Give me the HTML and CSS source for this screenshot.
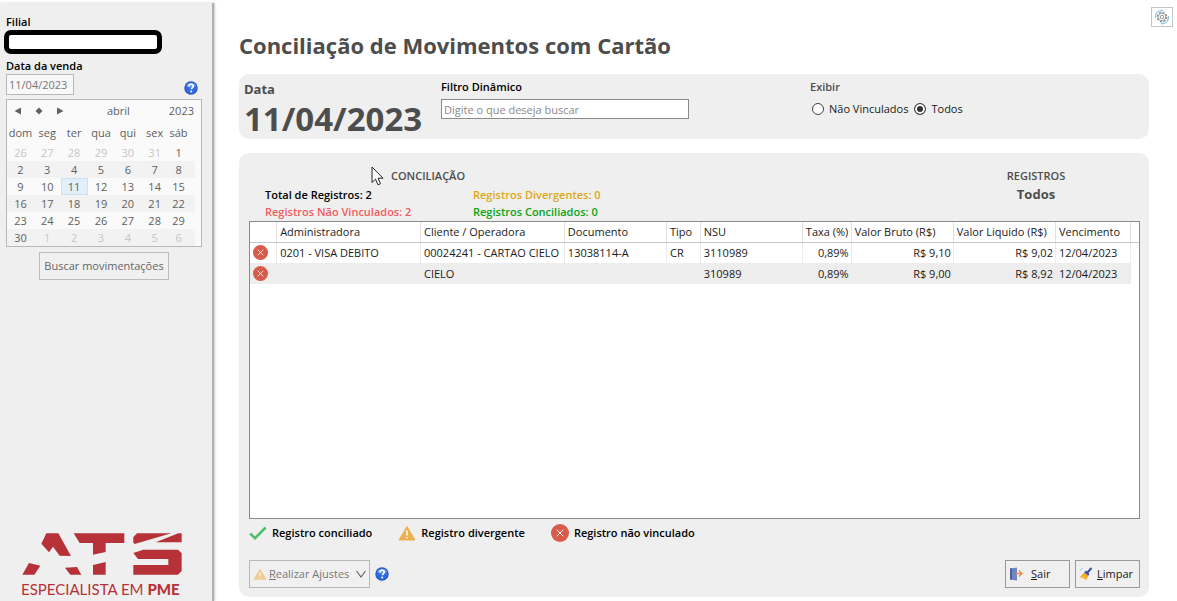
FILE: index.html
```html
<!DOCTYPE html>
<html lang="pt-BR">
<head>
    <meta charset="UTF-8">
    <meta name="viewport" content="width=device-width, initial-scale=1.0">
    <title>Conciliação de Movimentos com Cartão</title>
    <link rel="stylesheet" href="styles.css">
</head>
<body>
    <!-- shared icons -->
    <svg class="symbols" aria-hidden="true">
        <symbol id="icon-help" viewBox="0 0 14 14">
            <circle cx="7" cy="7" r="6.7" fill="#1f4fc0"/>
            <circle cx="7" cy="7" r="5.8" fill="#2f6be0"/>
            <path d="M2 5a5.5 5.5 0 0 1 10 0Q7 8 2 5z" fill="#6a9cf0"/>
            <path d="M4.9 5.5c0-1.5 1-2.2 2.2-2.2s2.2.7 2.2 1.9c0 1.5-2 1.6-2 3" fill="none" stroke="#fff" stroke-width="1.6"/>
            <circle cx="7.2" cy="10.5" r="1" fill="#fff"/>
        </symbol>
        <symbol id="icon-error" viewBox="0 0 18 18">
            <circle cx="9" cy="9" r="9" fill="#d75a4a"/>
            <path d="M6 6l6 6M12 6l-6 6" stroke="#fff" stroke-width="1" stroke-linecap="round"/>
        </symbol>
        <symbol id="icon-warn" viewBox="0 0 18 16">
            <path d="M9 1.5L17 15H1z" fill="#efb04d" stroke="#efb04d" stroke-width="1" stroke-linejoin="round"/>
            <path d="M9 5.5v5M9 12v1.6" stroke="#fff" stroke-width="1.6"/>
        </symbol>
        <symbol id="icon-check" viewBox="0 0 18 14">
            <path d="M1.2 7.6L6 12.2 16.6 1.5" fill="none" stroke="#4fc06a" stroke-width="2.6"/>
        </symbol>
    </svg>

    <aside class="sidebar">
        <label class="field_label" for="filial">Filial</label>
        <input type="text" id="filial" class="filial">
        <label class="field_label" for="data_venda">Data da venda</label>
        <div class="date_row">
            <input type="text" id="data_venda" class="date_box" value="11/04/2023">
            <a href="#" class="help" aria-label="Ajuda"><svg width="14" height="14"><use href="#icon-help"/></svg></a>
        </div>

        <div class="calendar">
            <div class="calendar_head">
                <button class="nav" aria-label="Anterior"><svg width="8" height="8"><path d="M7 0.5v7L0.5 4z"/></svg></button>
                <button class="nav" aria-label="Hoje"><svg width="8" height="8"><path d="M4 0.5L7.5 4 4 7.5 0.5 4z"/></svg></button>
                <button class="nav" aria-label="Próximo"><svg width="8" height="8"><path d="M1 0.5v7L7.5 4z"/></svg></button>
                <span class="month">abril</span>
                <span>2023</span>
            </div>
            <table class="days">
                <thead>
                    <tr><th>dom</th><th>seg</th><th>ter</th><th>qua</th><th>qui</th><th>sex</th><th>sáb</th></tr>
                </thead>
                <tbody>
                    <tr><td class="out">26</td><td class="out">27</td><td class="out">28</td><td class="out">29</td><td class="out">30</td><td class="out">31</td><td>1</td></tr>
                    <tr><td>2</td><td>3</td><td>4</td><td>5</td><td>6</td><td>7</td><td>8</td></tr>
                    <tr><td>9</td><td>10</td><td class="selected">11</td><td>12</td><td>13</td><td>14</td><td>15</td></tr>
                    <tr><td>16</td><td>17</td><td>18</td><td>19</td><td>20</td><td>21</td><td>22</td></tr>
                    <tr><td>23</td><td>24</td><td>25</td><td>26</td><td>27</td><td>28</td><td>29</td></tr>
                    <tr><td>30</td><td class="out">1</td><td class="out">2</td><td class="out">3</td><td class="out">4</td><td class="out">5</td><td class="out">6</td></tr>
                </tbody>
            </table>
        </div>
        <button class="buttons search">Buscar movimentações</button>

        <div class="logo">
            <svg width="160" height="42" viewBox="67 38 480 126" fill="#b63238">
                <path d="M140 39H176L214 107 180 106 160 79 148 96 125 70z"/>
                <path d="M88 128L122 136 104 163H68zM196 142L232 140 245 163H212z"/>
                <path d="M222 39H374V68H318V95L280 103V68H240z"/>
                <path d="M280 134L318 125V163H280z"/>
                <path d="M412 39H515L405 71 401 66V50z"/>
                <path d="M536 39H546V66H468z"/>
                <path d="M401 98L430 88H535L546 99V152L535 163H401V134H506V116H415z"/>
            </svg>
            <p class="slogan">ESPECIALISTA EM <b>PME</b></p>
        </div>
    </aside>

    <main class="main">
        <header class="top">
            <h1 class="heading">Conciliação de Movimentos com Cartão</h1>
            <button class="config" aria-label="Configurações">
                <svg width="16" height="16" viewBox="0 0 16 16" fill="none">
                    <path d="M1.5 9A6.6 6.6 0 0 1 8 1.4M14.5 7A6.6 6.6 0 0 1 8 14.6" stroke="#8cc8ea" stroke-width="1.2"/>
                    <path d="M7.5 0l2 1.4-2 1.4M8.5 13.2l-2 1.4 2 1.4" fill="#8cc8ea"/>
                    <circle cx="8" cy="8" r="4.6" stroke="#8a8a8a" stroke-width="1.4" stroke-dasharray="2 1.61"/>
                    <circle cx="8" cy="8" r="3.8" stroke="#8a8a8a" stroke-width="0.8"/>
                    <circle cx="8" cy="8" r="1.7" stroke="#8a8a8a" stroke-width="0.9"/>
                </svg>
            </button>
        </header>

        <section class="card filters">
            <div class="filter_date">
                <h2>Data</h2>
                <p class="big_date">11/04/2023</p>
            </div>
            <div class="filter_text">
                <label class="field_label" for="filtro">Filtro Dinâmico</label>
                <input type="text" id="filtro" class="textbox" placeholder="Digite o que deseja buscar">
            </div>
            <fieldset class="filter_show">
                <legend>Exibir</legend>
                <label><input type="radio" name="exibir">Não Vinculados</label>
                <label><input type="radio" name="exibir" checked>Todos</label>
            </fieldset>
        </section>

        <section class="card records">
            <div class="summary">
                <div class="totals">
                    <h3>CONCILIAÇÃO</h3>
                    <div class="totals_grid">
                        <span>Total de Registros: 2</span>
                        <span class="yellow">Registros Divergentes: 0</span>
                        <span class="red">Registros Não Vinculados: 2</span>
                        <span class="green">Registros Conciliados: 0</span>
                    </div>
                </div>
                <div class="showing">
                    <h3>REGISTROS</h3>
                    <p>Todos</p>
                </div>
            </div>

            <div class="grid_box">
                <table class="grid">
                    <colgroup>
                        <col class="c_icon"><col class="c_name"><col class="c_name"><col class="c_mid"><col class="c_type"><col class="c_mid"><col class="c_rate"><col class="c_mid"><col class="c_mid"><col class="c_due"><col class="c_end">
                    </colgroup>
                    <thead>
                        <tr>
                            <th></th>
                            <th>Administradora</th>
                            <th>Cliente / Operadora</th>
                            <th>Documento</th>
                            <th>Tipo</th>
                            <th>NSU</th>
                            <th>Taxa (%)</th>
                            <th>Valor Bruto (R$)</th>
                            <th>Valor Liquido (R$)</th>
                            <th>Vencimento</th>
                            <th></th>
                        </tr>
                    </thead>
                    <tbody>
                        <tr>
                            <td><svg width="15" height="15"><use href="#icon-error"/></svg></td>
                            <td>0201 - VISA DEBITO</td>
                            <td>00024241 - CARTAO CIELO</td>
                            <td>13038114-A</td>
                            <td>CR</td>
                            <td>3110989</td>
                            <td class="num">0,89%</td>
                            <td class="num">R$ 9,10</td>
                            <td class="num">R$ 9,02</td>
                            <td>12/04/2023</td>
                            <td class="end"></td>
                        </tr>
                        <tr>
                            <td><svg width="15" height="15"><use href="#icon-error"/></svg></td>
                            <td></td>
                            <td>CIELO</td>
                            <td></td>
                            <td></td>
                            <td>310989</td>
                            <td class="num">0,89%</td>
                            <td class="num">R$ 9,00</td>
                            <td class="num">R$ 8,92</td>
                            <td>12/04/2023</td>
                            <td class="end"></td>
                        </tr>
                    </tbody>
                </table>
            </div>

            <ul class="legend">
                <li><svg width="18" height="14"><use href="#icon-check"/></svg>Registro conciliado</li>
                <li><svg width="18" height="16"><use href="#icon-warn"/></svg>Registro divergente</li>
                <li><svg width="18" height="18"><use href="#icon-error"/></svg>Registro não vinculado</li>
            </ul>

            <div class="actions">
                <button class="buttons adjust" disabled>
                    <svg class="faded" width="14" height="12"><use href="#icon-warn"/></svg>
                    <span><u>R</u>ealizar Ajustes</span>
                    <svg class="arrow" width="10" height="8"><path d="M0.5 1L5 7 9.5 1" fill="none" stroke="#666" stroke-width="1.2"/></svg>
                </button>
                <a href="#" class="help" aria-label="Ajuda"><svg width="14" height="14"><use href="#icon-help"/></svg></a>
                <button class="buttons exit">
                    <svg width="14" height="14" viewBox="0 0 14 14">
                        <path d="M1 1.5L8 0.5V13.5L1 12.5z" fill="#6f86c4"/>
                        <path d="M1 1.5L3 1.2V12.8L1 12.5z" fill="#4c5f9c"/>
                        <path d="M7 6.5h6M10 3.5l3 3-3 3" fill="none" stroke="#ef8a4a" stroke-width="1.3"/>
                    </svg>
                    <span><u>S</u>air</span>
                </button>
                <button class="buttons clear">
                    <svg width="14" height="14" viewBox="0 0 14 14">
                        <path d="M12.5 1L8 6" stroke="#3b4fa0" stroke-width="2"/>
                        <path d="M5 5.5L9 9 10.5 7 7 3.5z" fill="#3f56b0"/>
                        <path d="M5 5.5L9 9 7.5 13 1 10z" fill="#f6a623"/>
                        <path d="M3 9l4 3" stroke="#fbd25a"/>
                        <path d="M1 3h2M3 1v1" stroke="#8fc9ee"/>
                    </svg>
                    <span><u>L</u>impar</span>
                </button>
            </div>
        </section>
    </main>

    <svg class="pointer" width="13" height="20" viewBox="0 0 13 20">
        <path d="M1 1V16.5L4.5 13.2 7 18.8 9.5 17.7 7 12.2H12z" fill="#fff" stroke="#222" stroke-width="1"/>
    </svg>
</body>
</html>
```

FILE: styles.css
```css
*
{
    box-sizing: border-box;
}
body
{
    margin: 0;
    min-height: 100vh;
    display: flex;
    padding-top: 3px;
    background-color: #ffffff;
    font-family: "Open Sans", "Noto Sans", sans-serif;
    font-size: 11px;
    line-height: 16px;
    color: #1a1a1a;
}
h1, h2, h3, p, ul, fieldset
{
    margin: 0;
    padding: 0;
}
svg
{
    display: block;
    flex: none;
}
button, input
{
    font: inherit;
    color: inherit;
}
.symbols
{
    display: none;
}
.field_label
{
    display: block;
    font-weight: 600;
    color: #000000;
}

/* sidebar */
.sidebar
{
    width: 214px;
    flex: none;
    display: flex;
    flex-direction: column;
    padding: 11px 10px 3px 6px;
    background-color: #efefef;
    border-right: 2px solid #b0b0b0;
    box-shadow: 1px 0 2px #cccccc;
}
.filial
{
    width: 158px;
    height: 24px;
    margin: 0 0 4px -2px;
    border: 5px solid #000000;
    border-radius: 7px;
    background-color: #ffffff;
}
.date_row
{
    display: flex;
    justify-content: space-between;
    align-items: flex-end;
    padding-right: 4px;
    margin-bottom: 4px;
}
.date_box
{
    width: 68px;
    height: 21px;
    padding: 0 2px;
    border: 1px solid #b8b8b8;
    background-color: #f8f8f8;
    color: #777777;
}
.calendar
{
    border: 1px solid #b8b8b8;
    background-color: #fafafa;
    color: #606060;
}
.calendar_head
{
    display: flex;
    align-items: center;
    gap: 13px;
    height: 22px;
    padding: 0 7px;
}
.nav
{
    padding: 0;
    border: 0;
    background: none;
}
.nav svg
{
    fill: #606060;
}
.month
{
    flex: 1;
    text-align: center;
    padding-left: 4px;
}
.days
{
    width: 100%;
    table-layout: fixed;
    border-collapse: collapse;
    text-align: center;
    border-right: 12px solid transparent;
}
.days th
{
    height: 22px;
    padding: 0;
    font-weight: normal;
}
.days td
{
    height: 17px;
    padding: 0;
    line-height: 15px;
}
.days tbody tr:nth-child(even)
{
    background-color: #f2f2f2;
}
.days .out
{
    color: #c6c6c6;
}
.days .selected
{
    background-color: #e1effa;
    outline: 1px solid #c8e2f6;
    outline-offset: -1px;
}
.buttons
{
    display: flex;
    align-items: center;
    height: 28px;
    padding: 0 8px;
    border: 1px solid #a8a8a8;
    background-color: #f0f0f0;
}
.search
{
    align-self: center;
    margin-top: 5px;
    padding: 0 4px;
    color: #666666;
    border-color: #bcbcbc;
}
.logo
{
    margin-top: auto;
    padding-left: 15px;
    color: #b63238;
}
.logo svg
{
    margin-left: 1px;
}
.slogan
{
    margin-top: 5px;
    font-family: Lato, sans-serif;
    font-size: 15px;
    line-height: 18px;
    white-space: nowrap;
}
.slogan b
{
    font-weight: 900;
}

/* main area */
.main
{
    flex: 1;
    min-width: 0;
    display: flex;
    flex-direction: column;
    padding: 4px 28px 4px 25px;
}
.top
{
    display: flex;
    justify-content: space-between;
    align-items: flex-start;
    height: 67px;
    margin-right: -24px;
}
.heading
{
    padding-top: 22px;
    font-size: 22px;
    line-height: 32px;
    color: #4d4d4d;
}
.config
{
    padding: 1px 2px;
    border: 1px solid #c4c4c4;
    background-color: #ffffff;
}
.card
{
    border-radius: 10px;
    background-color: #efefef;
}
.filters
{
    display: flex;
    height: 65px;
    margin-bottom: 14px;
    padding: 5px;
}
.filter_date
{
    width: 197px;
    color: #4d4d4d;
}
.filter_date h2
{
    font-size: 13px;
    line-height: 20px;
}
.big_date
{
    font-size: 33px;
    line-height: 40px;
    font-weight: bold;
}
.textbox
{
    width: 248px;
    height: 20px;
    margin-top: 4px;
    padding: 0 2px;
    border: 1px solid #8a8a8a;
    background-color: #ffffff;
}
.textbox::placeholder
{
    color: #8a8a8a;
}
.filter_show
{
    display: flex;
    gap: 4px;
    margin-left: 121px;
    border: 0;
}
.filter_show legend
{
    padding: 0;
    margin-bottom: 5px;
    font-weight: 600;
    color: #4d4d4d;
}
.filter_show label
{
    display: flex;
    align-items: center;
    gap: 5px;
    height: 18px;
}
.filter_show input
{
    appearance: none;
    width: 12px;
    height: 12px;
    margin: 0 0 0 2px;
    border: 1px solid #444444;
    border-radius: 50%;
    background-color: #ffffff;
}
.filter_show input:checked
{
    background-color: #333333;
    box-shadow: inset 0 0 0 2px #ffffff;
}

/* records */
.records
{
    flex: 1;
    display: flex;
    flex-direction: column;
    padding: 14px 9px 9px 10px;
}
.summary
{
    display: flex;
    justify-content: space-between;
    text-align: center;
}
.summary h3
{
    font-size: 11px;
    line-height: 18px;
    font-weight: 600;
    color: #4d4d4d;
}
.totals
{
    width: 358px;
}
.totals_grid
{
    display: grid;
    grid-template-columns: 208px auto;
    padding: 1px 0 1px 16px;
    line-height: 17px;
    text-align: left;
    font-weight: 600;
    color: #000000;
}
.totals_grid span
{
    white-space: nowrap;
}
.totals_grid .yellow
{
    color: #dca814;
}
.totals_grid .red
{
    color: #f75a5f;
}
.totals_grid .green
{
    color: #0aa516;
}
.showing
{
    width: 208px;
}
.showing p
{
    font-size: 13px;
    line-height: 18px;
    font-weight: bold;
    color: #4d4d4d;
}
.grid_box
{
    flex: 1;
    border: 1px solid #8a8a8a;
    background-color: #ffffff;
}
.grid
{
    width: 100%;
    table-layout: fixed;
    border-collapse: collapse;
    white-space: nowrap;
}
.c_icon { width: 3%; }
.c_name { width: 16.2%; }
.c_mid { width: 11.5%; }
.c_type { width: 3.8%; }
.c_rate { width: 5.5%; }
.c_due { width: 8.4%; }
.c_end { width: 1%; }
.grid th
{
    height: 20px;
    padding: 0 3px;
    text-align: left;
    font-weight: normal;
    border-right: 1px solid #e0e0e0;
    border-bottom: 1px solid #c8c8c8;
}
.grid th:last-child
{
    border-right: 0;
}
.grid td
{
    height: 21px;
    padding: 0 3px;
    border-right: 1px solid #ececec;
}
.grid tbody tr:nth-child(even) td
{
    background-color: #ededed;
}
.grid .num
{
    padding-right: 2px;
    text-align: right;
}
.grid tbody tr .end
{
    border: 0;
}
.grid tbody tr:nth-child(even) .end
{
    background-color: #ffffff;
}
.legend
{
    display: flex;
    gap: 26px;
    height: 28px;
    list-style: none;
    font-weight: 600;
    color: #000000;
}
.legend li
{
    display: flex;
    align-items: center;
    gap: 5px;
}
.actions
{
    display: flex;
    align-items: center;
    gap: 5px;
    margin-top: 13px;
}
.adjust
{
    gap: 2px;
    padding: 0 3px;
    border-color: #b8b8b8;
    color: #777777;
}
.faded
{
    opacity: 0.6;
}
.arrow
{
    margin-left: 5px;
}
.exit, .clear
{
    width: 65px;
    padding: 0 3px;
    border-color: #999999;
}
.exit
{
    gap: 8px;
    margin-left: auto;
}
.clear
{
    gap: 4px;
}

/* mouse pointer */
.pointer
{
    position: absolute;
    left: 371px;
    top: 166px;
}
```
